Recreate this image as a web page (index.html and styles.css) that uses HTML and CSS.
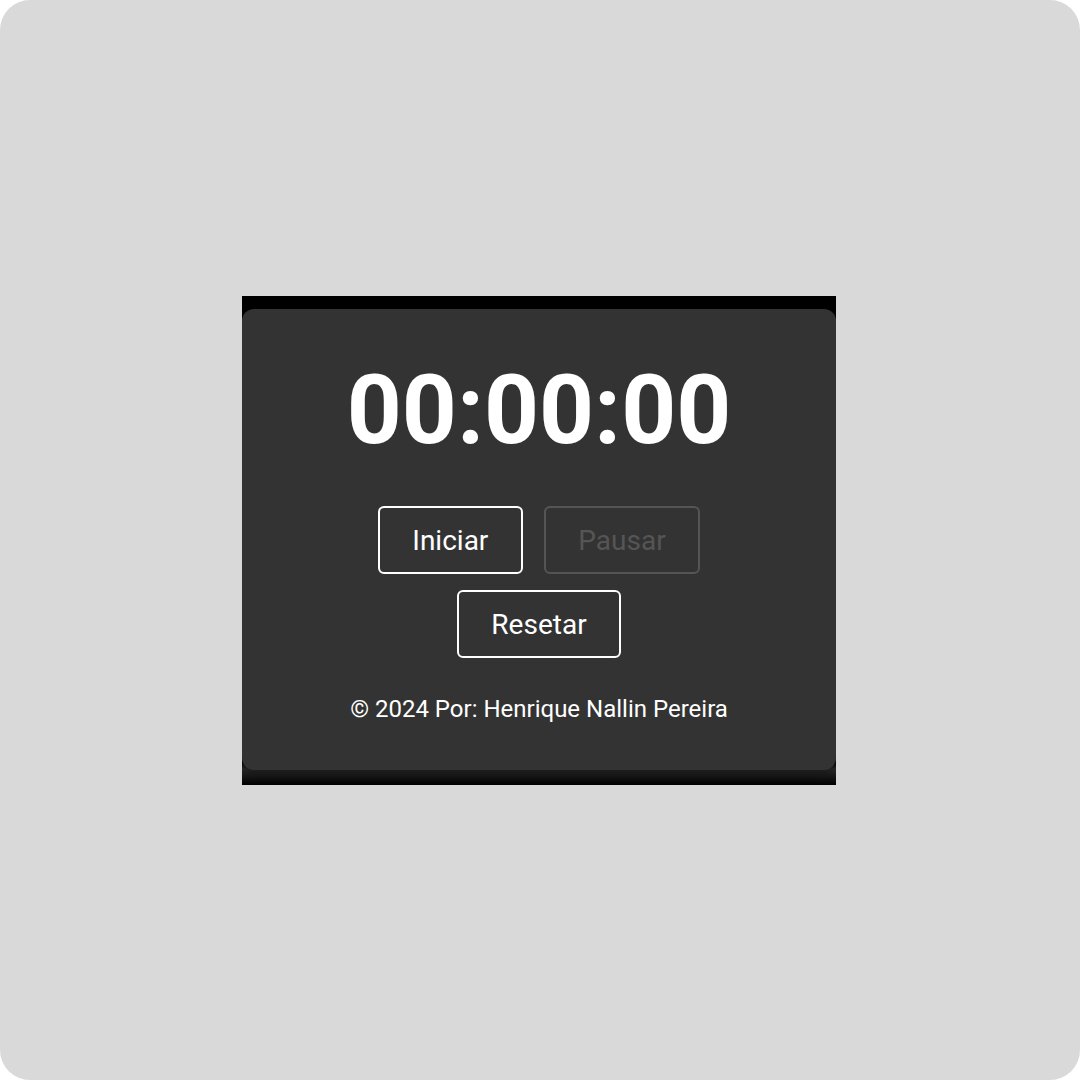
FILE: index.html
```html
<!DOCTYPE html>
<html lang="pt-BR">
<head>
<meta charset="utf-8">
<title>Cronômetro</title>
<link rel="stylesheet" href="styles.css">
</head>
<body>
<div class="screen">
  <div class="frame">
    <main class="card">
      <h1 class="timer">00:00:00</h1>
      <div class="controls">
        <button class="btn">Iniciar</button>
        <button class="btn" disabled>Pausar</button>
        <button class="btn">Resetar</button>
      </div>
      <footer class="credit">© 2024 Por: Henrique Nallin Pereira</footer>
    </main>
  </div>
</div>
</body>
</html>
```

FILE: styles.css
```css
html, body {
  margin: 0;
  padding: 0;
  background: #ffffff;
}
.screen {
  width: 1080px;
  height: 1080px;
  background: #d9d9d9;
  border-radius: 30px;
  display: flex;
  align-items: center;
  justify-content: center;
  font-family: Roboto, "Liberation Sans", sans-serif;
}
.frame {
  width: 594px;
  height: 489px;
  box-sizing: border-box;
  background: linear-gradient(to bottom, #000 0, #000 466px, #2a2a2a 473px, #000 489px);
  padding-top: 13px;
  margin-top: 1px;
  margin-right: 2px;
  overflow: hidden;
}
.card {
  box-sizing: border-box;
  height: 461px;
  background: #333333;
  border-radius: 12px;
  box-shadow: 0 3px 8px rgba(0,0,0,0.35);
  display: flex;
  flex-direction: column;
  align-items: center;
  padding-top: 45px;
}
.timer {
  margin: 0;
  color: #fff;
  font-size: 96px;
  font-weight: 700;
  line-height: normal;
}
.controls {
  margin-top: 40px;
  width: 360px;
  display: flex;
  flex-wrap: wrap;
  justify-content: center;
  column-gap: 21px;
  row-gap: 16px;
}
.btn {
  font-family: Roboto, "Liberation Sans", sans-serif;
  font-size: 28px;
  line-height: 33px;
  color: #fff;
  background: transparent;
  border: 2px solid #fff;
  border-radius: 6px;
  padding: 16px 32.5px 15px;
  margin: 0;
}
.btn:disabled {
  color: #555555;
  border-color: #555555;
}
.credit {
  margin-top: 37px;
  color: #fff;
  font-size: 24px;
  line-height: normal;
}
```
